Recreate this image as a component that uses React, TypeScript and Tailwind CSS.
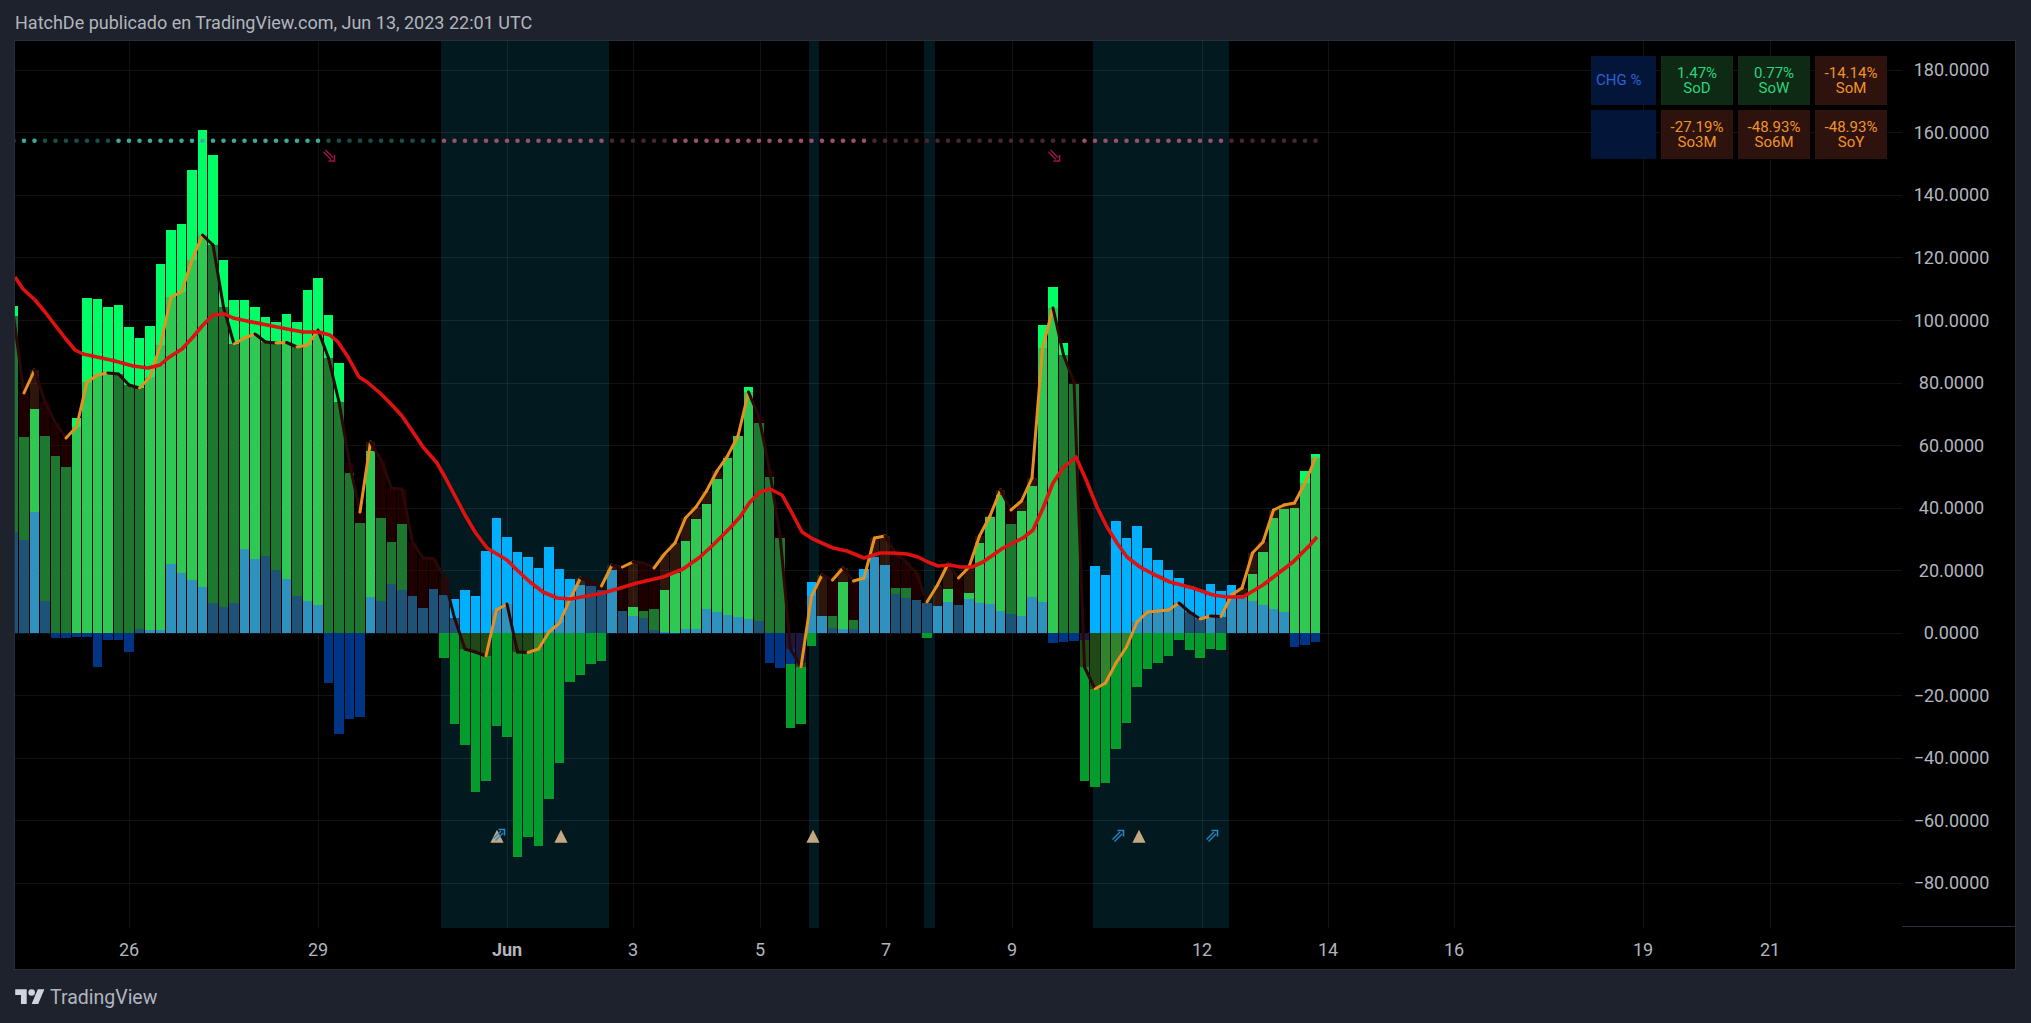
// one row per bar, all page-pixel y values: [green top, blue top, line, negative green bottom, navy bottom]
type Bar = [number, number, number, number, number]

const bars: Bar[] = [
  [306, 532, 316, 0, 0], [437, 540, 393, 0, 0], [409, 512, 370, 0, 0], [436, 601, 402, 0, 0], [456, 0, 423, 0, 638],
  [467, 0, 438, 0, 638], [418, 0, 427, 0, 637], [298, 0, 382, 0, 637], [299, 0, 375, 0, 667], [307, 0, 373, 0, 640],
  [305, 0, 374, 0, 640], [327, 0, 385, 0, 652], [338, 629, 388, 0, 0], [326, 630, 377, 0, 0], [264, 630, 345, 0, 0],
  [230, 564, 297, 0, 0], [224, 573, 292, 0, 0], [170, 580, 260, 0, 0], [130, 587, 235, 0, 0], [155, 603, 245, 0, 0],
  [260, 607, 307, 0, 0], [300, 603, 344, 0, 0], [300, 549, 338, 0, 0], [307, 559, 334, 0, 0], [317, 556, 342, 0, 0],
  [322, 570, 343, 0, 0], [314, 579, 342.5, 0, 0], [322, 596, 347, 0, 0], [290, 601, 345, 0, 0], [278, 605, 330, 0, 0],
  [315, 0, 358, 0, 683], [363, 0, 402, 0, 734], [473, 0, 463, 0, 719], [523, 0, 512, 0, 717], [451, 597, 442, 0, 0],
  [518, 601, 460, 0, 0], [542, 584, 488, 0, 0], [524, 590, 489, 0, 0], [596, 596, 542, 0, 0], [0, 608, 558, 0, 0],
  [0, 589, 558.5, 0, 0], [0, 595, 577, 658, 0], [0, 599, 618, 724, 0], [0, 590, 649, 745, 0], [0, 596, 652, 792, 0],
  [0, 551, 656, 781, 0], [0, 518, 610, 726, 0], [0, 537, 604, 737, 0], [0, 552, 652, 857, 0], [0, 557, 652.5, 837, 0],
  [0, 568, 649, 846, 0], [0, 547, 632, 799, 0], [0, 569, 623, 763, 0], [0, 579, 599, 682, 0], [0, 585, 578, 675, 0],
  [0, 586, 582, 664, 0], [0, 590, 586, 661, 0], [0, 570, 565, 0, 0], [0, 611, 567, 0, 0], [607, 616, 562, 0, 0],
  [611, 618, 563, 0, 0], [609, 630, 568, 0, 0], [590, 632, 554, 0, 634], [573, 0, 543, 0, 634], [541, 629, 518, 0, 0],
  [519, 629, 507, 0, 0], [504, 609, 491, 0, 0], [479, 612, 471, 0, 0], [458, 615, 456, 0, 0], [436, 617, 436, 0, 0],
  [387, 619, 392, 0, 0], [423, 621, 417, 0, 0], [477, 0, 470, 0, 663], [538, 0, 535, 0, 668], [0, 0, 649, 728, 664],
  [0, 0, 667, 724, 663], [0, 582, 596, 646, 0], [0, 616, 575, 0, 0], [616, 628, 580, 0, 0], [582, 629, 568, 0, 0],
  [620, 629, 581, 0, 0], [0, 569, 578, 0, 0], [0, 557, 538, 0, 0], [0, 565, 536, 0, 0], [588, 594, 553, 0, 0],
  [588, 598, 562, 0, 0], [600, 600, 573, 0, 0], [0, 603, 602, 638, 0], [0, 606, 585, 0, 0], [589, 602, 564, 0, 0],
  [0, 605, 578, 0, 0], [593, 599, 567, 0, 0], [543, 603, 536, 0, 0], [517, 604, 516, 0, 0], [495, 611, 490, 0, 0],
  [524, 614, 510, 0, 0], [511, 616, 501, 0, 0], [486, 597, 478, 0, 0], [325, 602, 348, 0, 0], [287, 0, 308, 0, 643],
  [343, 0, 355, 0, 642], [384, 0, 382, 0, 641], [0, 0, 667, 781, 640], [0, 566, 689, 787, 0], [0, 575, 683, 783, 0],
  [0, 521, 663, 749, 0], [0, 538, 647, 723, 0], [0, 526, 622, 687, 0], [0, 548, 612, 669, 0], [0, 560, 611, 663, 0],
  [0, 570, 610, 656, 0], [0, 578, 603, 640, 0], [0, 586, 612, 650, 0], [0, 590, 619, 658, 0], [0, 584, 616, 649, 0],
  [0, 591, 616.5, 650, 0], [0, 585, 595, 0, 0], [0, 595, 588, 0, 0], [574, 601, 553, 0, 0], [552, 605, 542, 0, 0],
  [518, 609, 510, 0, 0], [509, 612, 505, 0, 0], [508, 0, 503, 0, 647], [471, 0, 483, 0, 645], [454, 0, 458, 0, 642],
]

const ZERO = 632.7
const barX = (i: number) => 13.5 + 10.5 * i

const redLine = [
  [15, 277], [23, 289], [35, 300], [45, 312], [55, 325], [65, 338], [75, 350], [83, 354], [97, 357], [115, 361],
  [133, 366], [148, 368], [160, 365], [168, 358], [182, 349], [193, 337], [203, 325], [213, 315], [225, 314], [233, 318],
  [247, 321], [267, 325], [287, 329], [303, 332], [318, 332], [330, 335], [338, 342], [348, 357], [359, 377], [367, 382],
  [380, 393], [392, 405], [402, 416], [413, 432], [423, 447], [437, 463], [445, 477], [465, 515], [475, 532], [487, 548],
  [497, 554], [507, 560], [517, 570], [530, 582], [543, 592], [557, 598], [570, 599], [587, 596], [603, 593], [617, 589],
  [637, 583], [663, 577], [683, 569], [700, 557], [713, 545], [730, 528], [740, 517], [750, 502], [760, 492], [770, 489],
  [782, 495], [792, 513], [802, 532], [813, 539], [833, 548], [847, 551], [864, 558], [880, 553], [893, 553], [907, 554],
  [918, 557], [928, 562], [938, 566], [950, 565], [960, 567], [972, 567], [983, 562], [993, 555], [1003, 548], [1013, 543],
  [1023, 538], [1033, 530], [1043, 508], [1053, 483], [1063, 468], [1076, 457], [1087, 482], [1097, 507], [1107, 527],
  [1117, 543], [1127, 557], [1140, 567], [1153, 574], [1170, 582], [1193, 588], [1213, 595], [1227, 597], [1243, 597],
  [1263, 585], [1280, 572], [1293, 562], [1310, 545], [1317, 537],
]

const hLines = [180, 160, 140, 120, 100, 80, 60, 40, 20, 0, -20, -40, -60, -80]
const timeTicks: [string, number][] = [
  ['26', 129], ['29', 318], ['Jun', 507], ['3', 633], ['5', 760], ['7', 886], ['9', 1012],
  ['12', 1202], ['14', 1328], ['16', 1454], ['19', 1643], ['21', 1770],
]
const zones = [[441, 609], [809, 819], [924, 935], [1093, 1229]]
const triangles = [497, 561, 813, 1139]

const dotColor = (i: number) => {
  if (i < 41) return ((i > 0 && i < 3) || (i >= 10 && i < 30)) ? '#3aa99e' : '#14514c'
  const bright = (i < 57) || (i >= 63 && i < 82) || (i >= 102 && i < 116)
  return bright ? '#9c4f6c' : '#4a2534'
}

const cells = [
  { top: 'CHG %', kind: 'head' }, { top: '1.47%', bottom: 'SoD', kind: 'up' }, { top: '0.77%', bottom: 'SoW', kind: 'up' }, { top: '-14.14%', bottom: 'SoM', kind: 'down' },
  { top: '', kind: 'head' }, { top: '-27.19%', bottom: 'So3M', kind: 'down' }, { top: '-48.93%', bottom: 'So6M', kind: 'down' }, { top: '-48.93%', bottom: 'SoY', kind: 'down' },
]

const Arrow = ({ x, y, color, up }: { x: number; y: number; color: string; up?: boolean }) => (
  <g transform={`translate(${x} ${y}) rotate(${up ? -90 : 0})`} stroke={color} strokeWidth="1.4" fill="none">
    <path d="M-5.5 -3.5 L2 4 M-3.5 -5.5 L4 2" />
    <path d="M-0.5 5.5 H5.5 V-0.5" strokeWidth="1.6" />
  </g>
)

const Chart = () => (
  <svg width="2000" height="928" viewBox="15 41 2000 928" className="block">
    {zones.map(([a, b]) => (
      <rect key={a} x={a} y={41} width={b - a} height={887} fill="#021a1f" />
    ))}
    {hLines.map((v) => (
      <line key={v} x1={15} x2={1902} y1={Math.round(ZERO - v * 3.127) + 0.5} y2={Math.round(ZERO - v * 3.127) + 0.5} stroke="#fff" strokeOpacity="0.07" />
    ))}
    {timeTicks.map(([t, x]) => (
      <line key={t} x1={x + 0.5} x2={x + 0.5} y1={41} y2={928} stroke="#fff" strokeOpacity="0.07" />
    ))}

    <g shapeRendering="crispEdges">
      {bars.map(([g, b, l, ng, nv], i) => {
        const x = barX(i) - 4.7
        const rising = i === 0 ? false : l < bars[i - 1][2]
        return (
          <g key={i}>
            {g > 0 && <rect x={x} y={g} width={9.4} height={ZERO - g} fill="#00ff66" />}
            {b > 0 && <rect x={x} y={b} width={9.4} height={ZERO - b} fill="#00b0ff" />}
            {ng > 0 && <rect x={x} y={ZERO} width={9.4} height={ng - ZERO} fill="#059c2e" />}
            {nv > 0 && <rect x={x} y={ZERO} width={9.4} height={nv - ZERO} fill="#003484" />}
            <rect
              x={x}
              y={Math.min(l, ZERO)}
              width={9.4}
              height={Math.abs(l - ZERO)}
              fill={rising ? 'rgb(153 73 40 / 0.3)' : 'rgb(56 0 0 / 0.533)'}
            />
          </g>
        )
      })}
    </g>

    {bars.slice(1).map((row, n) => {
      const rising = row[2] < bars[n][2]
      return (
        <line
          key={n}
          x1={barX(n)}
          y1={bars[n][2]}
          x2={barX(n + 1)}
          y2={row[2]}
          stroke={rising ? '#e8901f' : '#2a0808'}
          strokeWidth="3"
          strokeLinecap="round"
        />
      )
    })}
    <polyline points={redLine.map((p) => p.join(',')).join(' ')} fill="none" stroke="#df1111" strokeWidth="3.6" strokeLinejoin="round" />

    {bars.map((_, i) => (
      <circle key={i} cx={barX(i)} cy={140.7} r={2.3} fill={dotColor(i)} />
    ))}

    {triangles.map((x) => (
      <polygon key={x} points={`${x},829.7 ${x + 6.6},842.7 ${x - 6.6},842.7`} fill="#c4a880" />
    ))}
    <Arrow x={499} y={835} color="#2a85c4" up />
    <Arrow x={1118} y={836} color="#2a85c4" up />
    <Arrow x={1212} y={836} color="#2a85c4" up />
    <Arrow x={329} y={155.5} color="#a0124a" />
    <Arrow x={1054} y={155.5} color="#a0124a" />

    <line x1={1902} x2={2015} y1={926.5} y2={926.5} stroke="#2a2e39" />

    <g fontFamily="Roboto, sans-serif" fontSize="18" fill="#b2b5be" textAnchor="middle">
      {hLines.map((v) => (
        <text key={v} x={1951.5} y={ZERO - v * 3.127 + 6.5}>
          {(v < 0 ? '\u2212' : '') + Math.abs(v).toFixed(4)}
        </text>
      ))}
      {timeTicks.map(([t, x]) => (
        <text key={t} x={x} y={956} fontWeight={t === 'Jun' ? 700 : 400}>
          {t}
        </text>
      ))}
    </g>
  </svg>
)

const App = () => {
  return (
    <div className="flex h-[1023px] w-[2031px] flex-col overflow-hidden bg-[#1e222d] font-['Roboto',sans-serif]">
      <div className="flex h-10 items-center pl-[15px] pt-[4px] text-[18px] text-[#b2b5be]">
        HatchDe publicado en TradingView.com, Jun 13, 2023 22:01 UTC
      </div>

      <div className="relative ml-[14px] h-[930px] w-[2002px] border border-[#2a2e39] bg-black">
        <Chart />
        {/* performance table sits on top of the chart */}
        <div className="absolute left-[1576px] top-[15px] grid grid-cols-[65px_72px_72px_72px] auto-rows-[49px] gap-[5px] text-[15px] leading-[15px]">
          {cells.map((c, i) => {
            if (c.kind === 'head') {
              return (
                <div key={i} className="flex items-center bg-[#04153a] pl-[5px] text-[#2b61d8]">
                  {c.top}
                </div>
              )
            }
            return (
              <div
                key={i}
                className={
                  c.kind === 'up'
                    ? 'flex flex-col items-center justify-center bg-[#0e2a14] text-[#2bd47f]'
                    : 'flex flex-col items-center justify-center bg-[#2e120e] text-[#f0942a]'
                }
              >
                <span>{c.top}</span>
                <span>{c.bottom}</span>
              </div>
            )
          })}
        </div>
      </div>

      <div className="flex flex-1 items-center gap-[5px] pl-[15px] pt-[2px] text-[#b2b5be]">
        <svg width="30" height="23" viewBox="0 0 36 28" fill="#d1d4dc">
          <path d="M14 22H7V11H0V4h14v18zM28 22h-8l7.5-18h8L28 22z" />
          <circle cx="20" cy="8" r="4" />
        </svg>
        <span className="text-[19.5px]">TradingView</span>
      </div>
    </div>
  )
}

export default App
